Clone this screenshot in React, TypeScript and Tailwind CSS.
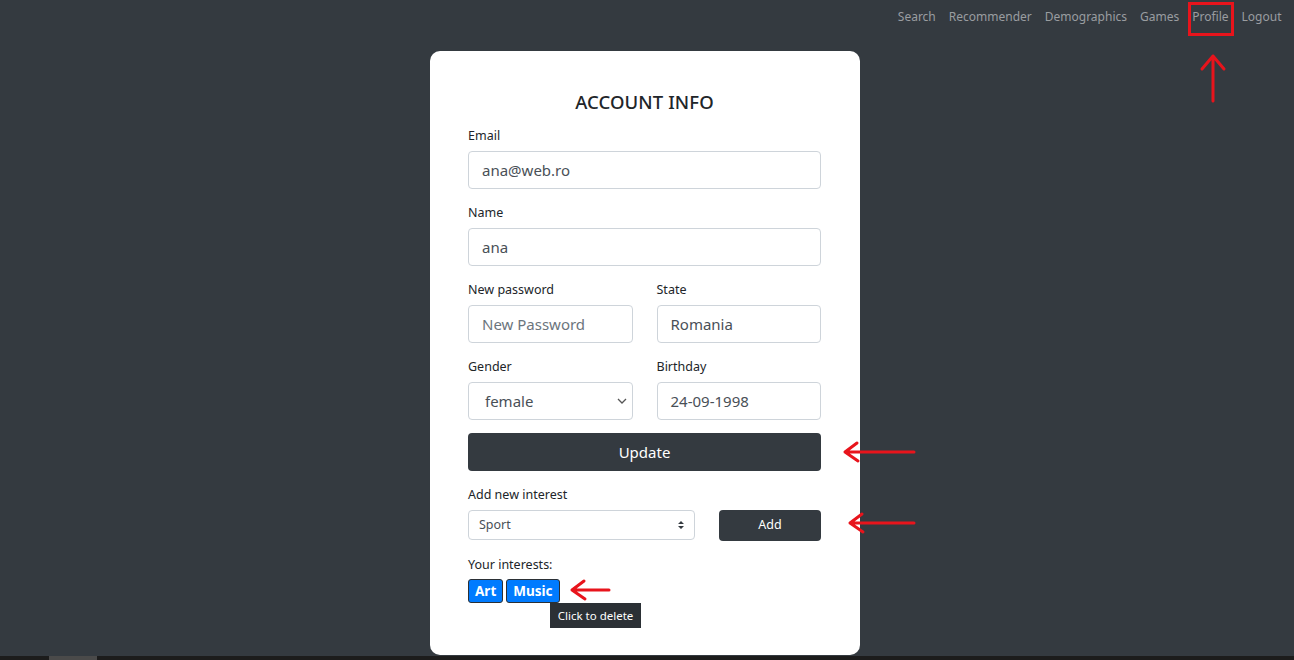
import React from 'react';

const font = { fontFamily: '"Noto Sans", "Open Sans", sans-serif' };

const navLinks = ['Search', 'Recommender', 'Demographics', 'Games', 'Profile', 'Logout'];

function Label({ children }: { children: React.ReactNode }) {
  return <div className="text-[12.5px] leading-[20px] pt-[1px] text-[#212529] mb-[5px]">{children}</div>;
}

function Field({ value, placeholder }: { value?: string; placeholder?: string }) {
  return (
    <div className="h-[38px] border border-[#ced4da] rounded-[4px] bg-white flex items-center px-[13px] text-[15px]">
      {value ? (
        <span className="text-[#495057]">{value}</span>
      ) : (
        <span className="text-[#6c757d]">{placeholder}</span>
      )}
    </div>
  );
}

function LeftArrow({ width }: { width: number }) {
  return (
    <svg width={width} height="24" viewBox={`0 0 ${width} 24`} fill="none">
      <path
        d={`M${width - 2} 12 H3 M15 3 L3 12 L16 21`}
        stroke="#e8141c"
        strokeWidth="3"
        strokeLinecap="round"
        strokeLinejoin="round"
      />
    </svg>
  );
}

export default function App() {
  return (
    <div className="h-[660px] bg-[#343a40] flex flex-col overflow-hidden relative" style={font}>
      <nav className="h-[33px] flex justify-end items-center pr-[6px]">
        {navLinks.map((link) => (
          <span key={link} className="px-[6.5px] text-[12px] leading-[20px] text-[#9a9da0]">
            <span className="relative">
              {link}
              {link === 'Profile' && (
                <span className="absolute left-[-4px] right-[-5px] top-[-6px] h-[34px] border-[3px] border-[#e8141c]" />
              )}
            </span>
          </span>
        ))}
      </nav>

      <svg className="absolute left-[1199px] top-[53px]" width="28" height="50" viewBox="0 0 28 50" fill="none">
        <path d="M14 48 V3 M3 16 L14 3 L25 16" stroke="#e8141c" strokeWidth="3" strokeLinecap="round" strokeLinejoin="round" />
      </svg>

      <div className="flex-1 pt-[18px] overflow-hidden">
        <div className="ml-[430px] w-[430px] h-[604px] bg-white rounded-[10px] pl-[38px] pr-[39px] pt-[37px] relative">
          <h4 className="text-center text-[18.5px] leading-[28px] font-medium text-[#212529] mb-[9px] tracking-[0.1px]">
            ACCOUNT INFO
          </h4>

          <div className="mb-[13px]">
            <Label>Email</Label>
            <Field value="ana@web.ro" />
          </div>

          <div className="mb-[13px]">
            <Label>Name</Label>
            <Field value="ana" />
          </div>

          <div className="grid grid-cols-2 gap-x-[24px] mb-[13px]">
            <div>
              <Label>New password</Label>
              <Field placeholder="New Password" />
            </div>
            <div>
              <Label>State</Label>
              <Field value="Romania" />
            </div>
          </div>

          <div className="grid grid-cols-2 gap-x-[24px] mb-[13px]">
            <div>
              <Label>Gender</Label>
              <div className="h-[38px] border border-[#ced4da] rounded-[4px] flex items-center justify-between pl-[16px] pr-[5px] text-[15px] text-[#495057]">
                <span>female</span>
                <svg width="10" height="6" viewBox="0 0 10 6" fill="none">
                  <path d="M1 1 L5 5 L9 1" stroke="#555" strokeWidth="1.3" />
                </svg>
              </div>
            </div>
            <div>
              <Label>Birthday</Label>
              <Field value="24-09-1998" />
            </div>
          </div>

          <div className="h-[38px] rounded-[4px] bg-[#343a40] text-white text-[15px] flex items-center justify-center mb-[13px]">
            Update
          </div>

          <Label>Add new interest</Label>
          <div className="flex items-start gap-[24px] mb-[13px]">
            <div className="w-[227px] h-[30px] border border-[#ced4da] rounded-[4px] flex items-center justify-between pl-[10px] pr-[10px] text-[12.5px] text-[#495057]">
              <span>Sport</span>
              <svg width="6" height="10" viewBox="0 0 6 10">
                <path d="M0 4 L3 1 L6 4 Z M0 6 L3 9 L6 6 Z" fill="#343a40" />
              </svg>
            </div>
            <div className="flex-1 h-[31px] rounded-[4px] bg-[#343a40] text-white text-[12.5px] flex items-center justify-center">
              Add
            </div>
          </div>

          <Label>Your interests:</Label>
          <div className="flex gap-[3px] mt-[-1px]">
            <span className="h-[24px] px-[6px] rounded-[3px] bg-[#007bff] border border-[#2b3035] text-white text-[13.5px] font-bold flex items-center">
              Art
            </span>
            <span className="h-[24px] px-[6px] rounded-[3px] bg-[#007bff] border border-[#2b3035] text-white text-[13.5px] font-bold flex items-center">
              Music
            </span>
          </div>
          <div className="ml-[82px] w-[91px] h-[25px] bg-[#2b3035] text-white text-[11.5px] flex items-center justify-center">
            Click to delete
          </div>

          <div className="absolute left-[412px] top-[389px]">
            <LeftArrow width={74} />
          </div>
          <div className="absolute left-[417px] top-[460px]">
            <LeftArrow width={69} />
          </div>
          <div className="absolute left-[139px] top-[527px]">
            <LeftArrow width={42} />
          </div>
        </div>
      </div>

      <div className="h-[4px] bg-[#1c1c1c] flex">
        <div className="ml-[49px] w-[48px] bg-[#4a4a4a]" />
      </div>
    </div>
  );
}
